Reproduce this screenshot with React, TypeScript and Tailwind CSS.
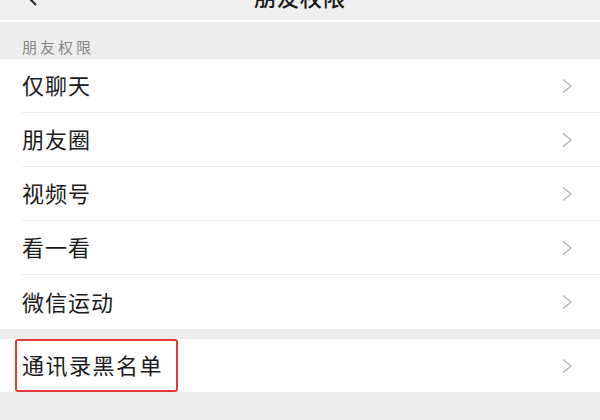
import React from "react";

const items = ["仅聊天", "朋友圈", "视频号", "看一看", "微信运动"];

function Chevron() {
  return (
    <svg width="12" height="16" viewBox="0 0 12 16" className="shrink-0">
      <polyline points="2,1.5 10,8 2,14.5" fill="none" stroke="#b3b3b3" strokeWidth="1.3" />
    </svg>
  );
}

function Row({ label, last }: { label: string; last?: boolean }) {
  return (
    <div className="bg-white pl-[22px]">
      <div className={`flex items-center h-[54px] pr-[27px] ${last ? "" : "border-b border-[#ececec]"}`}>
        <span className="flex-1 text-[22px] leading-none text-[#1b1b1b] tracking-[1px] pb-[3px]">{label}</span>
        <Chevron />
      </div>
    </div>
  );
}

export default function App() {
  return (
    <div
      className="w-[600px] h-[420px] bg-[#ededed] overflow-hidden"
      style={{ fontFamily: '"Noto Sans CJK SC", "Noto Sans", sans-serif' }}
    >
      {/* nav bar, mostly cut off above the frame */}
      <div className="h-[20px] overflow-hidden bg-[#efefef]">
        <div className="flex items-center h-[44px] -mt-[26px] px-[24px]">
          <svg width="14" height="22" viewBox="0 0 14 22" className="shrink-0">
            <polyline points="12,2 3,11 12,20" fill="none" stroke="#222" strokeWidth="2" />
          </svg>
          <span className="flex-1 text-center text-[22px] font-medium text-[#1b1b1b] -ml-[14px] tracking-[1px]">朋友权限</span>
        </div>
      </div>
      <div className="h-[2px] bg-white" />

      <div className="h-[37px] flex items-end pb-[5px] pl-[22px]">
        <span className="text-[15px] leading-none text-[#858585] tracking-[3px]">朋友权限</span>
      </div>

      {items.map((label, i) => (
        <Row key={label} label={label} last={i === items.length - 1} />
      ))}

      <div className="h-[10px]" />

      <div className="bg-white pl-[15px]">
        <div className="flex items-center h-[53px] pr-[27px]">
          <div className="flex-1">
            <div className="w-[163px] h-[53px] border-2 border-[#e23a3a] rounded-[3px] flex items-center pl-[5px]">
              <span className="text-[22px] leading-none text-[#1b1b1b] tracking-[1.5px] pb-[3px]">通讯录黑名单</span>
            </div>
          </div>
          <Chevron />
        </div>
      </div>
    </div>
  );
}
